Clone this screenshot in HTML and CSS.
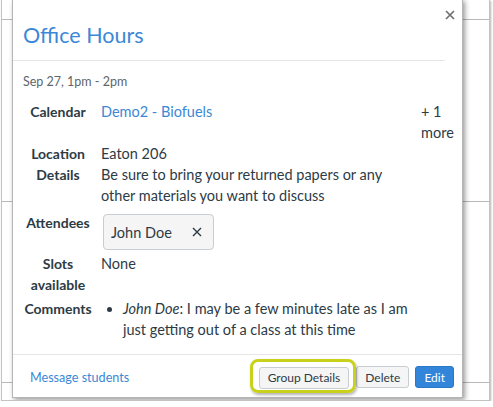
FILE: index.html
```html
<!DOCTYPE html>
<html lang="en">
<head>
    <meta charset="UTF-8">
    <title>Office Hours</title>
    <link rel="stylesheet" href="styles.css">
</head>
<body>
<div class="shot">
    <div class="cal-line line-a"></div>
    <div class="cal-line line-b"></div>
    <div class="cal-line line-c"></div>

    <div class="popup">
        <div class="pop-head">
            <h2 class="pop-title">Office Hours</h2>
        </div>
        <a class="close-btn" href="#" title="Close">
            <svg width="10" height="10" viewBox="0 0 10 10"><path d="M1 1L9 9M9 1L1 9" stroke="#707070" stroke-width="1.7" fill="none"/></svg>
        </a>
        <div class="pop-body">
            <div class="date">Sep 27, 1pm - 2pm</div>
            <div class="details">
                <div class="lbl">Calendar</div>
                <div class="val"><a href="#">Demo2 - Biofuels</a></div>
                <div class="more">+ 1<br>more</div>

                <div class="lbl">Location</div>
                <div class="val">Eaton 206</div>

                <div class="lbl">Details</div>
                <div class="val">Be sure to bring your returned papers or any other materials you want to discuss</div>

                <div class="lbl attend-lbl">Attendees</div>
                <div class="val">
                    <span class="chip">John Doe
                        <svg width="10" height="10" viewBox="0 0 10 10"><path d="M1 1L9 9M9 1L1 9" stroke="#2d3b45" stroke-width="1.4" fill="none"/></svg>
                    </span>
                </div>

                <div class="lbl">Slots<br>available</div>
                <div class="val">None</div>

                <div class="lbl comments-row">Comments</div>
                <div class="val comments-row">
                    <ul class="comments">
                        <li><em>John Doe</em>: I may be a few minutes late as I am just getting out of a class at this time</li>
                    </ul>
                </div>
            </div>
        </div>
        <div class="pop-foot">
            <a class="msg-link" href="#">Message students</a>
            <div class="btns">
                <span class="annot"><button class="btn">Group Details</button></span>
                <button class="btn">Delete</button>
                <button class="btn btn-primary">Edit</button>
            </div>
        </div>
    </div>
</div>
</body>
</html>
```

FILE: styles.css
```css
*{
    margin: 0;
    padding: 0;
    box-sizing: border-box;
}
body{
    background: #fff;
    font-family: Lato, "Open Sans", sans-serif;
    color: #2d3b45;
}
a{
    color: #3b88d6;
    text-decoration: none;
}
.shot{
    position: relative;
    width: 489px;
    height: 401px;
    margin-left: 1px;
    border: 1px solid #c2c2c2;
    border-top: 0;
    box-shadow: 1px 1px 2px rgba(0,0,0,.3);
    background: #fff;
    overflow: hidden;
}
.cal-line{
    position: absolute;
    left: 0;
    right: 0;
    height: 1px;
    background: #b8b8b8;
}
.line-a{ top: 19px; }
.line-b{ top: 201px; }
.line-c{ top: 382px; }

.popup{
    position: absolute;
    left: 10px;
    top: -1px;
    width: 451px;
    background: #fff;
    border: 1px solid #b5b5b5;
    box-shadow: 2px 2px 5px rgba(0,0,0,.4);
}
.pop-head{
    margin-right: 17px;
    padding: 20px 10px 10px;
    border-bottom: 1px solid #e6e6e6;
}
.pop-title{
    font-size: 21.5px;
    line-height: 30px;
    font-weight: normal;
    color: #3b88d6;
}
.close-btn{
    position: absolute;
    top: 10px;
    right: 7px;
    display: block;
    line-height: 0;
}
.pop-body{
    padding: 0 9px 14px 10px;
}
.date{
    margin-top: 13px;
    font-size: 12.5px;
    line-height: 16px;
    color: #5d666d;
}
.details{
    margin-top: 11px;
    display: grid;
    grid-template-columns: 70px 1fr 32px;
    column-gap: 8px;
    font-size: 14.5px;
    line-height: 21px;
}
.lbl{
    grid-column: 1;
    font-size: 14px;
    font-weight: bold;
    text-align: center;
}
.val{
    grid-column: 2;
}
.more{
    white-space: nowrap;
}
.attend-lbl{
    padding-top: 6px;
}
.chip{
    display: inline-flex;
    align-items: center;
    gap: 20px;
    height: 36px;
    margin: 8px 0 3px 2px;
    padding: 0 11px 0 7px;
    background: #f5f5f5;
    border: 1px solid #c7cdd1;
    border-radius: 4px;
}
.comments-row{
    margin-top: 3px;
}
.comments{
    padding-left: 22px;
}
.pop-foot{
    display: flex;
    align-items: center;
    justify-content: space-between;
    padding: 11px 8px 8px 17px;
    border-top: 1px solid #e6e6e6;
}
.msg-link{
    font-size: 12.6px;
}
.btns{
    display: flex;
    gap: 6px;
}
.annot{
    position: relative;
    margin-right: 1px;
}
.annot:after{
    content: "";
    position: absolute;
    top: -7px;
    bottom: -4px;
    left: -9px;
    right: -7px;
    border: 3px solid #c8d21a;
    border-radius: 8px;
    box-shadow: 1px 2px 3px rgba(0,0,0,.3);
}
.btn{
    height: 22px;
    padding: 0 8px;
    font-family: Lato, sans-serif;
    font-size: 12px;
    color: #2d3b45;
    background: #f5f5f5;
    border: 1px solid #c7cdd1;
    border-radius: 3px;
}
.btn-primary{
    background: #3285d9;
    border-color: #2a78c7;
    color: #fff;
}
```
